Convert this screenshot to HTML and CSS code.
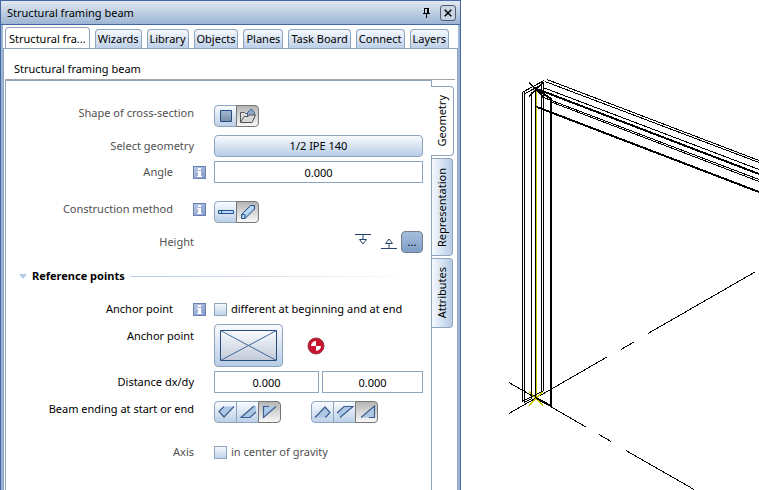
FILE: index.html
```html
<!DOCTYPE html>
<html lang="en">
<head>
<meta charset="utf-8">
<title>Structural framing beam</title>
<link rel="stylesheet" href="styles.css">
</head>
<body>
<div class="workspace">
  <section class="palette">
    <header class="titlebar">
      <h1 class="titlebar-text">Structural framing beam</h1>
      <button class="pin" aria-label="Pin palette">
        <svg width="9" height="10" viewBox="0 0 9 10" shape-rendering="crispEdges"><path d="M2 0h5v5h1v1H5v4H4V6H1V5h1zM3 1v4h2V1z" fill="#000" fill-rule="evenodd"/></svg>
      </button>
      <button class="close" aria-label="Close palette">
        <svg width="8" height="8" viewBox="0 0 8 8"><path d="M.7.7l6.6 6.6M7.3.7L.7 7.3" stroke="#000" stroke-width="1.5"/></svg>
      </button>
    </header>
    <div class="palette-body">
      <nav class="tabs">
        <button class="tab tab-active">Structural fra...</button>
        <button class="tab">Wizards</button>
        <button class="tab">Library</button>
        <button class="tab">Objects</button>
        <button class="tab">Planes</button>
        <button class="tab">Task Board</button>
        <button class="tab">Connect</button>
        <button class="tab">Layers</button>
      </nav>
      <div class="page">
        <h2 class="page-title">Structural framing beam</h2>
        <div class="page-content">
          <form class="form">
            <div class="row">
              <div class="label-cell muted label-high"><span>Shape of cross-section</span></div>
              <div class="segments">
                <button type="button" class="segment" aria-label="Standard section">
                  <svg width="14" height="14" viewBox="0 0 14 14"><defs><linearGradient id="sq" x2="0" y2="1"><stop stop-color="#a3b9d0"/><stop offset="1" stop-color="#768ea8"/></linearGradient></defs><path d="M1.500 1.500h11v11h-11z" fill="url(#sq)" stroke="#284b7d"/></svg>
                </button>
                <button type="button" class="segment segment-on" aria-label="Section from catalog">
                  <svg width="18" height="16" viewBox="0 0 18 16"><path d="M1.500 14V4.500h4l1 1h5V8" fill="#ddd" stroke="#555"/><path d="M8.500 10V4.500l4-3.500 3 3.500V10z" fill="#8fa8c9" stroke="#45658f"/><path d="M1.500 14.500L5 8.500h4l1.500-1.500H16.500L13 14.500z" fill="#d9d9d9" stroke="#555"/></svg>
                </button>
              </div>
            </div>
            <div class="row gap-m">
              <div class="label-cell muted"><span>Select geometry</span></div>
              <button type="button" class="wide-button">1/2 IPE 140</button>
            </div>
            <div class="row gap-s">
              <div class="label-cell muted"><label for="angle">Angle</label><button type="button" class="info" aria-label="About angle"><svg width="7" height="9" viewBox="0 0 7 9"><path d="M2 0h3v2H2zM1 3h4v5h1v1H1V8h1V4H1z" fill="#fff"/></svg></button></div>
              <input id="angle" class="field" type="text" value="0.000">
            </div>
            <div class="row gap-l">
              <div class="label-cell muted label-high"><span>Construction method</span><button type="button" class="info" aria-label="About construction method"><svg width="7" height="9" viewBox="0 0 7 9"><path d="M2 0h3v2H2zM1 3h4v5h1v1H1V8h1V4H1z" fill="#fff"/></svg></button></div>
              <div class="segments">
                <button type="button" class="segment" aria-label="Horizontal">
                  <svg width="16" height="4" viewBox="0 0 16 4"><path d="M.5.5h15v3H.5zM3.500.5v3" fill="#b9daf5" stroke="#24508c"/></svg>
                </button>
                <button type="button" class="segment segment-on" aria-label="Free in space">
                  <svg width="16" height="16" viewBox="0 0 16 16"><path d="M1.500 10.500L10.500 1.500h4v3.500L5 14.500H1.500z" fill="#a9cdef" stroke="#24508c"/><path d="M1.500 10.500H5v4" fill="none" stroke="#24508c"/><path d="M5 10.500l8-8" stroke="#e4f2ff"/></svg>
                </button>
              </div>
            </div>
            <div class="row gap-m">
              <div class="label-cell muted"><span>Height</span></div>
              <div class="height-tools">
                <button type="button" class="plain" aria-label="Top plane"><svg width="16" height="22" viewBox="0 0 16 22"><path d="M0 3.500h16M8 3.500v5M4.500 8.500h7L8 13z" fill="none" stroke="#24426c"/></svg></button>
                <button type="button" class="plain" aria-label="Bottom plane"><svg width="16" height="22" viewBox="0 0 16 22"><path d="M0 17.500h16M8 17.500v-5M4.500 12.500h7L8 8z" fill="none" stroke="#24426c"/></svg></button>
                <button type="button" class="more">...</button>
              </div>
            </div>
            <h3 class="section"><span class="section-arrow"></span>Reference points</h3>
            <div class="row gap-11">
              <div class="label-cell"><span>Anchor point</span><button type="button" class="info" aria-label="About anchor point"><svg width="7" height="9" viewBox="0 0 7 9"><path d="M2 0h3v2H2zM1 3h4v5h1v1H1V8h1V4H1z" fill="#fff"/></svg></button></div>
              <label class="check"><input type="checkbox">different at beginning and at end</label>
            </div>
            <div class="row gap-s">
              <div class="label-cell label-anchor"><span>Anchor point</span></div>
              <div class="anchor-tools">
                <button type="button" class="anchor" aria-label="Choose anchor point">
                  <svg width="57" height="31" viewBox="0 0 57 31"><defs><linearGradient id="an" x2="0" y2="1"><stop stop-color="#f8fcff"/><stop offset="1" stop-color="#c2c9d8"/></linearGradient></defs><path d="M.5.5h56v30H.5z" fill="url(#an)" stroke="#284b7d"/><path d="M.5.5l56 30M56.500.5l-56 30" stroke="#41689d"/></svg>
                </button>
                <svg class="gravity" width="18" height="18" viewBox="0 0 18 18"><circle cx="9" cy="9" r="8" fill="#c8142d" stroke="#963546"/><path d="M9 4a5 5 0 0 0-5 5h5zM9 14a5 5 0 0 0 5-5H9z" fill="#fff"/></svg>
              </div>
            </div>
            <div class="row gap-s">
              <div class="label-cell"><span>Distance dx/dy</span></div>
              <div class="pair">
                <input class="field" type="text" value="0.000" aria-label="Distance dx">
                <input class="field" type="text" value="0.000" aria-label="Distance dy">
              </div>
            </div>
            <div class="row gap-m">
              <div class="label-cell label-high"><span>Beam ending at start or end</span></div>
              <div class="endings">
                <div class="segments">
                  <button type="button" class="segment" aria-label="Start perpendicular"><svg width="18" height="14" viewBox="0 0 18 14"><path d="M7 1.500L2 6.500l5 5.500L17 1.500z" fill="#adc8e6"/><path d="M7 1.500L2 6.500l5 5.500L17 1.500" fill="none" stroke="#3d5f8f" stroke-width="1.2"/></svg></button>
                  <button type="button" class="segment" aria-label="Start horizontal"><svg width="18" height="14" viewBox="0 0 18 14"><path d="M15 1L2 12.500h9L17 7V1z" fill="#adc8e6"/><path d="M15 1L2 12.500h9L17 7" fill="none" stroke="#3d5f8f" stroke-width="1.2"/></svg></button>
                  <button type="button" class="segment segment-on" aria-label="Start vertical"><svg width="18" height="14" viewBox="0 0 18 14"><path d="M8 1.500H2.500v11L15 1.500z" fill="#adc8e6"/><path d="M8 1.500H2.500v11L15 1.500" fill="none" stroke="#3d5f8f" stroke-width="1.2"/></svg></button>
                </div>
                <div class="segments">
                  <button type="button" class="segment" aria-label="End perpendicular"><svg width="18" height="14" viewBox="0 0 18 14"><path d="M1 12.500L11 2l5 5.500-4.500 5z" fill="#adc8e6"/><path d="M1 12.500L11 2l5 5.500-4.500 5" fill="none" stroke="#3d5f8f" stroke-width="1.2"/></svg></button>
                  <button type="button" class="segment" aria-label="End horizontal"><svg width="18" height="14" viewBox="0 0 18 14"><path d="M1 8L8 1.500h9L4 12.500z" fill="#adc8e6"/><path d="M1 8L8 1.500h9L4 12.500" fill="none" stroke="#3d5f8f" stroke-width="1.2"/></svg></button>
                  <button type="button" class="segment segment-on" aria-label="End vertical"><svg width="18" height="14" viewBox="0 0 18 14"><path d="M3 12.500L16.500 1v11.500z" fill="#adc8e6"/><path d="M3 12.500L16.500 1v11.500H11" fill="none" stroke="#3d5f8f" stroke-width="1.2"/></svg></button>
                </div>
              </div>
            </div>
            <div class="row gap-l">
              <div class="label-cell muted"><span>Axis</span></div>
              <label class="check muted"><input type="checkbox">in center of gravity</label>
            </div>
          </form>
          <nav class="side-tabs">
            <button class="side-tab side-tab-active">Geometry</button>
            <button class="side-tab side-tab-long">Representation</button>
            <button class="side-tab">Attributes</button>
          </nav>
        </div>
      </div>
    </div>
  </section>
  <main class="viewport">
    <svg class="model" viewBox="461 0 298 490" preserveAspectRatio="xMinYMin slice" fill="none" stroke="#000" shape-rendering="crispEdges">
      <path d="M509 382.500l77 44.500M599 434.500l12 7M626 450.500l68 39M509 413.500l98-56.500M621 349.500l13-7.500M648 333.500l107-61.500"/>
      <path d="M529 391.500l14 14M529 405.500l14-14M536.500 90v309" stroke="#c8c800"/>
      <path d="M522.500 92v310M524.500 92v310M531.500 92v307M535.500 88v310M541.500 81v310M543.500 82v309M522 92.500l22-12M525 93.500l17-9M522 401.500l22-11M524 402.500l8-4M535.500 106.500l15.500 6M529 82.500l14 14M529 96.500l14-14"/>
      <path d="M551 98v308M536 398l15 8M538 90l13 9" stroke-width="2"/>
      <path d="M547 79.500l212 81M545 81.500l214 81M543 87.500l216 82M541 96.500l218 83M550 101.500l209 80"/>
      <path d="M537 89l222 85M537 107l222 85" stroke-width="2"/>
    </svg>
  </main>
</div>
</body>
</html>
```
FILE: styles.css
```css
* { box-sizing: border-box; }

body {
  margin: 0;
  background: #fff;
  color: #000;
  font: 11px/16px "Noto Sans", "Open Sans", sans-serif;
}

button, input {
  margin: 0;
  padding: 0;
  font: inherit;
  color: inherit;
}

button {
  display: flex;
  align-items: center;
  justify-content: center;
}

h1, h2, h3 { margin: 0; font: inherit; }

.workspace {
  display: grid;
  grid-template-columns: 461fr 298fr;
  min-height: 100vh;
}

.palette {
  display: flex;
  flex-direction: column;
  border: 1px solid #4468a4;
  border-bottom: 0;
}

.titlebar {
  display: flex;
  align-items: center;
  gap: 8px;
  height: 24px;
  padding: 0 4px 0 6px;
  border-bottom: 1px solid #4468a4;
  background: linear-gradient(#e1e8f2, #9cb5d3);
}

.titlebar-text { flex: 1; }

.pin { width: 12px; height: 12px; border: 0; background: none; }

.close {
  width: 16px;
  height: 16px;
  border: 1px solid #555d6b;
  border-radius: 3px;
  background: #c9d5e5;
}

.palette-body {
  flex: 1;
  display: flex;
  flex-direction: column;
  padding: 2px 2px 0;
  background: linear-gradient(90deg, #9cb5d3 2px, #fff 2px, #fff calc(100% - 2px), #9cb5d3 calc(100% - 2px));
}

.tabs {
  display: flex;
  align-items: flex-end;
  gap: 5px;
  height: 21px;
  padding: 0 8px 0 2px;
}

.tab {
  flex: 0 0 auto;
  height: 19px;
  padding: 0 2px;
  border: 1px solid #8fa5be;
  border-width: 1px 1px 0;
  border-radius: 4px 4px 0 0;
  background: linear-gradient(#f5f9fe, #bdd0e8);
}

.tab-active {
  height: 22px;
  margin-bottom: -1px;
  padding: 0 3px;
  background: #fff;
}

.page {
  flex: 1;
  display: flex;
  flex-direction: column;
  padding: 0 2px 0 1px;
  border: 1px solid #8fa5be;
  border-bottom: 0;
}

.page-title {
  height: 31px;
  padding: 12px 9px 0;
  line-height: 16px;
  border-bottom: 1px solid #a5a5a5;
}

.page-content {
  flex: 1;
  display: flex;
}

.form {
  flex: 1;
  padding: 24px 8px 0 0;
  border: 1px solid #8fa5be;
  border-bottom: 0;
}

.row {
  display: grid;
  grid-template-columns: 208fr 209fr;
  align-items: center;
  min-height: 22px;
}

.gap-s { margin-top: 4px; }
.gap-m { margin-top: 8px; }
.gap-11 { margin-top: 11px; }
.gap-l { margin-top: 18px; }

.label-cell {
  display: flex;
  justify-content: flex-end;
  align-items: center;
  gap: 20px;
  padding-right: 20px;
}

.label-cell:has(.info) { padding-right: 8px; }
.label-high { align-self: start; }
.label-anchor { align-self: start; padding-top: 4px; }
.muted { color: #505050; }

.info {
  width: 13px;
  height: 13px;
  border: 1px solid #6880b4;
  background: linear-gradient(135deg, #b9c9e6, #8499ca);
}

.segments { display: flex; }

.segment {
  width: 23px;
  height: 22px;
  border: 1px solid #8fa5be;
  background: linear-gradient(#f9fbfe, #bcd0e8);
}

.segment svg { flex: none; }
.segment + .segment { margin-left: -1px; }
.segment:first-child { border-radius: 4px 0 0 4px; }
.segment:last-child { border-radius: 0 4px 4px 0; }

.segment-on {
  border-color: #777;
  background: linear-gradient(#b5b5b5, #f8f8f8);
}

.wide-button {
  height: 22px;
  border: 1px solid #8fa5be;
  border-radius: 4px;
  background: linear-gradient(#f9fbfe, #b7cce6);
}

.field {
  width: 100%;
  min-width: 0;
  height: 22px;
  border: 1px solid #8fa5be;
  background: #fff;
  text-align: center;
}

.height-tools {
  display: flex;
  justify-content: flex-end;
  gap: 10px;
}

.plain { width: 16px; height: 22px; border: 0; background: none; }

.more {
  width: 22px;
  height: 22px;
  margin-left: -6px;
  border: 1px solid #777f8c;
  border-radius: 4px;
  background: linear-gradient(#a5bddb, #7f9fc7);
}

.section {
  display: flex;
  align-items: center;
  gap: 5px;
  height: 22px;
  margin-top: 12px;
  padding-left: 13px;
  font-weight: bold;
}

.section::after {
  content: "";
  flex: 1;
  height: 1px;
  background: linear-gradient(90deg, #b8cbe0, #fff);
}

.section-arrow {
  border: 4px solid transparent;
  border-top: 5px solid #b5cce6;
  border-bottom: 0;
}

.check {
  display: flex;
  align-items: center;
  gap: 4px;
  white-space: nowrap;
}

.check input {
  appearance: none;
  width: 13px;
  height: 13px;
  border: 1px solid #8fa5be;
  background: linear-gradient(#f5f9fd, #c0d2e8);
}

.anchor-tools {
  display: flex;
  align-items: center;
  gap: 24px;
}

.anchor {
  width: 69px;
  height: 43px;
  border: 1px solid #8fa5be;
  border-radius: 4px;
  background: linear-gradient(#f9fbfe, #b7cce6);
}

.pair {
  display: grid;
  grid-template-columns: 105fr 101fr;
  gap: 3px;
}

.endings { display: flex; gap: 30px; }

.side-tabs {
  display: flex;
  flex-direction: column;
  align-items: flex-start;
  gap: 2px;
  width: 23px;
  padding-top: 6px;
}

.side-tab {
  width: 21px;
  height: 70px;
  border: 1px solid #8fa5be;
  border-left: 0;
  border-radius: 0 4px 4px 0;
  background: linear-gradient(90deg, #f5f9fe, #b7cce6);
  writing-mode: sideways-lr;
}

.side-tab-long { height: 98px; }

.side-tab-active {
  width: 23px;
  margin-left: -1px;
  background: #fff;
}

.viewport { overflow: hidden; }

.model {
  display: block;
  width: 100%;
  height: 100%;
}
```
